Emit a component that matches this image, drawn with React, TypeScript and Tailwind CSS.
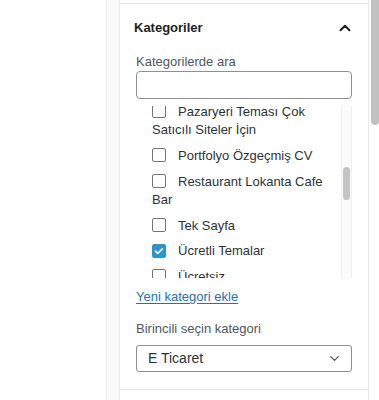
import { ChevronDown, ChevronUp } from "lucide-react";

type Item = { label: string; checked?: boolean };

const items: Item[] = [
  { label: "Pazaryeri Teması Çok Satıcılı Siteler İçin" },
  { label: "Portfolyo Özgeçmiş CV" },
  { label: "Restaurant Lokanta Cafe Bar" },
  { label: "Tek Sayfa" },
  { label: "Ücretli Temalar", checked: true },
  { label: "Ücretsiz" },
];

export default function App() {
  return (
    <div className="flex h-[400px] w-[379px] overflow-hidden bg-white font-['Liberation_Sans',Arial,sans-serif] text-[13px] text-[#1e1e1e]">
      <div className="w-[106px] shrink-0" />
      <div className="w-[14px] shrink-0 border-x border-[#ececec] bg-[#fafafa]" />

      <div className="flex w-[249px] shrink-0 flex-col border-r border-[#e6e6e6]">
        <div className="h-[4px] border-b border-[#e6e6e6]" />
        <div className="flex h-[48px] items-center justify-between pl-[14px] pr-[14px]">
          <span className="font-semibold">Kategoriler</span>
          <ChevronUp size={18} strokeWidth={2.6} className="text-[#1e1e1e]" />
        </div>

        <div className="px-[16px]">
          <div className="mt-[1px] leading-[18px] text-[#50575e]">Kategorilerde ara</div>
          <div className="h-[28px] rounded-[4px] border border-[#8c8f94]" />

          <div className="mt-[7px] flex h-[172px]">
            <div className="flex-1 overflow-hidden">
              <div className="-mt-[4px] flex flex-col gap-[7px] pl-[16px] pr-[6px]">
                {items.map((item) => (
                  <Row key={item.label} item={item} />
                ))}
              </div>
            </div>
            <div className="w-[11px] border-x border-[#f0f0f0] bg-[#fbfbfb] pt-[61px]">
              <div className="mx-auto h-[33px] w-[7px] rounded-full bg-[#c4c4c4]" />
            </div>
          </div>

          <div className="mt-[10px] leading-[18px]">
            <a href="#" className="text-[#2271b1] underline underline-offset-[2px]">
              Yeni kategori ekle
            </a>
          </div>
          <div className="mt-[14px] leading-[18px] text-[#50575e]">Birincili seçin kategori</div>
          <div className="mt-[7px] flex h-[27px] items-center justify-between rounded-[3px] border border-[#8c8f94] pl-[11px] pr-[9px] text-[14px] text-[#2c3338]">
            <span>E Ticaret</span>
            <ChevronDown size={15} strokeWidth={2} className="text-[#50575e]" />
          </div>
        </div>
        <div className="mt-[17px] border-b border-[#e6e6e6]" />
      </div>

      <div className="flex-1 pl-[2px]">
        <div className="h-[125px] w-[8px] rounded-b-full bg-[#c1c1c1]" />
      </div>
    </div>
  );
}

function Row({ item }: { item: Item }) {
  return (
    <div className="leading-[18px] text-[#2c3338]">
      <span
        className={`mr-[12px] inline-flex h-[14px] w-[14px] translate-y-[2px] items-center justify-center rounded-[2px] border ${
          item.checked ? "border-[#2b95d0] bg-[#2b95d0]" : "border-[#757575] bg-white"
        }`}
      >
        {item.checked && (
          <svg viewBox="0 0 14 14" className="h-[12px] w-[12px]">
            <path d="M3 7.2l2.6 2.6L11 4.4" fill="none" stroke="white" strokeWidth="1.9" strokeLinecap="round" strokeLinejoin="round" />
          </svg>
        )}
      </span>
      {item.label}
    </div>
  );
}
